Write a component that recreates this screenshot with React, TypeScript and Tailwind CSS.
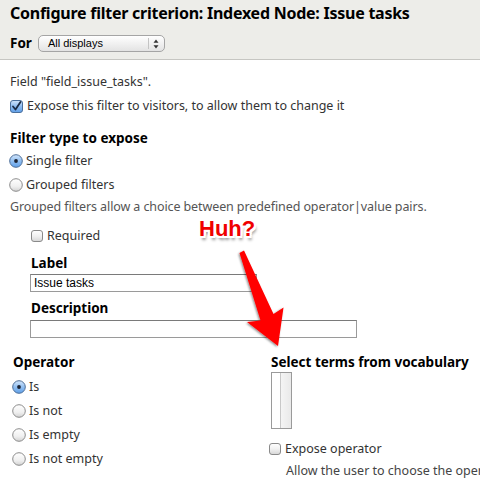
import React from "react";

function Checkbox({ checked = false }: { checked?: boolean }) {
  if (checked) {
    return (
      <svg width="13" height="13" viewBox="0 0 13 13" className="shrink-0">
        <defs>
          <linearGradient id="cbBlue" x1="0" y1="0" x2="0" y2="1">
            <stop offset="0" stopColor="#cfe3fa" />
            <stop offset="0.5" stopColor="#8dbbf0" />
            <stop offset="1" stopColor="#5f9ee6" />
          </linearGradient>
        </defs>
        <rect x="0.5" y="0.5" width="12" height="12" rx="2.5" fill="url(#cbBlue)" stroke="#4a6f9c" />
        <path d="M3 6.5 L5.5 9.5 L10.5 2" fill="none" stroke="#1a2a44" strokeWidth="1.8" strokeLinecap="round" strokeLinejoin="round" />
      </svg>
    );
  }
  return (
    <svg width="12" height="12" viewBox="0 0 12 12" className="shrink-0">
      <defs>
        <linearGradient id="cbGray" x1="0" y1="0" x2="0" y2="1">
          <stop offset="0" stopColor="#ffffff" />
          <stop offset="0.5" stopColor="#f1f1f1" />
          <stop offset="1" stopColor="#d6d6d6" />
        </linearGradient>
      </defs>
      <rect x="0.5" y="0.5" width="11" height="11" rx="2.5" fill="url(#cbGray)" stroke="#8a8a8a" />
    </svg>
  );
}

function Radio({ checked = false }: { checked?: boolean }) {
  if (checked) {
    return (
      <svg width="14" height="14" viewBox="0 0 14 14" className="shrink-0">
        <defs>
          <linearGradient id="rbBlue" x1="0" y1="0" x2="0" y2="1">
            <stop offset="0" stopColor="#d3e6fb" />
            <stop offset="0.5" stopColor="#92bff1" />
            <stop offset="1" stopColor="#5e9fe8" />
          </linearGradient>
        </defs>
        <circle cx="7" cy="7" r="6.3" fill="url(#rbBlue)" stroke="#4f6f98" />
        <circle cx="7" cy="7" r="1.9" fill="#1b2333" />
      </svg>
    );
  }
  return (
    <svg width="14" height="14" viewBox="0 0 14 14" className="shrink-0">
      <defs>
        <linearGradient id="rbGray" x1="0" y1="0" x2="0" y2="1">
          <stop offset="0" stopColor="#ffffff" />
          <stop offset="0.6" stopColor="#f0f0f0" />
          <stop offset="1" stopColor="#d2d2d2" />
        </linearGradient>
      </defs>
      <circle cx="7" cy="7" r="6.3" fill="url(#rbGray)" stroke="#8c8c8c" />
    </svg>
  );
}

export default function App() {
  return (
    <div className="relative w-[480px] h-[485px] overflow-hidden bg-white text-[12.5px] text-[#333] font-['Noto_Sans',sans-serif]">
      {/* Header */}
      <div className="h-[60px] bg-[#edede9] border-b border-[#c6c6c2] px-[10px] pt-[2px]">
        <h1 className="h-[22px] flex items-center text-[16px] font-bold text-black whitespace-nowrap tracking-[-0.25px]">
          Configure filter criterion: Indexed Node: Issue tasks
        </h1>
        <div className="mt-[9px] flex items-center gap-[6px]">
          <span className="text-[13.5px] font-bold text-black">For</span>
          <div className="relative w-[127px] h-[17px] rounded-[5px] border border-[#a5a5a5] bg-gradient-to-b from-white to-[#e3e3e3] flex items-center pl-[9px] text-[11px] text-black font-['Liberation_Sans',sans-serif]">
            All displays
            <div className="absolute right-[15px] top-[2px] bottom-[2px] w-px bg-[#c4c4c4]" />
            <svg width="6" height="10" viewBox="0 0 6 10" className="absolute right-[5px] top-[3px]">
              <path d="M3 0.5 L5.5 3.8 L0.5 3.8 Z" fill="#333" />
              <path d="M3 9.5 L5.5 6.2 L0.5 6.2 Z" fill="#333" />
            </svg>
          </div>
        </div>
      </div>

      {/* Body */}
      <div className="px-[10px]">
        <div className="mt-[10px] h-[24px] flex items-center">Field "field_issue_tasks".</div>
        <div className="h-[24px] flex items-center gap-[4px]">
          <Checkbox checked />
          <span>Expose this filter to visitors, to allow them to change it</span>
        </div>
        <div className="mt-[9px] h-[22px] flex items-center font-bold text-black text-[13.5px]">Filter type to expose</div>
        <div className="h-[24px] flex items-center gap-[3px] -ml-[1px]">
          <Radio checked />
          <span>Single filter</span>
        </div>
        <div className="h-[24px] flex items-center gap-[3px] -ml-[1px]">
          <Radio />
          <span>Grouped filters</span>
        </div>
        <div className="h-[20px] flex items-center text-[#555] tracking-[-0.1px]">
          Grouped filters allow a choice between predefined operator|value pairs.
        </div>

        <div className="pl-[20px]">
          <div className="mt-[7px] h-[24px] flex items-center gap-[4px] ml-[1px]">
            <Checkbox />
            <span>Required</span>
          </div>
          <div className="mt-[5px] h-[20px] flex items-center font-bold text-black ml-[1px] text-[13.5px]">Label</div>
          <div className="mt-[1px] w-[227px] h-[18px] border border-[#9a9a9a] border-t-[#7a7a7a] flex items-center pl-[3px] text-[12px] text-black font-['Liberation_Sans',sans-serif]">
            Issue tasks
          </div>
          <div className="mt-[6px] h-[20px] flex items-center font-bold text-black ml-[1px] text-[13.5px]">Description</div>
          <div className="mt-[2px] w-[327px] h-[18px] border border-[#9a9a9a] border-t-[#7a7a7a]" />
        </div>
      </div>

      {/* Two columns */}
      <div className="mt-[14px] flex">
        <div className="w-[271px] pl-[12px]">
          <div className="h-[20px] flex items-center font-bold text-black pl-[1px] text-[13.5px]">Operator</div>
          <div className="pt-[3px]">
            {[
              { t: "Is", c: true },
              { t: "Is not", c: false },
              { t: "Is empty", c: false },
              { t: "Is not empty", c: false },
            ].map((o) => (
              <div key={o.t} className="h-[24px] flex items-center gap-[3px]">
                <Radio checked={o.c} />
                <span>{o.t}</span>
              </div>
            ))}
          </div>
        </div>
        <div className="flex-1 min-w-0">
          <div className="h-[20px] flex items-center font-bold text-black whitespace-nowrap text-[13.5px]">Select terms from vocabulary</div>
          <div className="w-[21px] h-[57px] border border-[#9a9a9a] flex">
            <div className="w-[8px] h-full bg-white" />
            <div className="flex-1 h-full border-l border-[#c8c8c8] bg-gradient-to-r from-[#f4f4f4] to-[#e9e9e9]" />
          </div>
          <div className="mt-[8px] h-[24px] flex items-center gap-[4px] -ml-[2px]">
            <Checkbox />
            <span className="whitespace-nowrap">Expose operator</span>
          </div>
          <div className="mt-[1px] h-[18px] flex items-center pl-[15px] whitespace-nowrap text-[#444]">
            Allow the user to choose the operator.
          </div>
        </div>
      </div>

      {/* Annotation overlay */}
      <div className="absolute left-[199px] top-[218px] leading-none text-[22px] font-bold text-[#f00000] font-['Liberation_Sans',sans-serif] [text-shadow:-2px_-2px_0_#fff,2px_-2px_0_#fff,-2px_2px_0_#fff,2px_2px_0_#fff,0_-2px_0_#fff,0_2px_0_#fff,-2px_0_0_#fff,2px_0_0_#fff,2px_4px_3px_rgba(0,0,0,0.45)]">
        Huh?
      </div>
      <svg className="absolute left-0 top-0 pointer-events-none" width="480" height="485" viewBox="0 0 480 485">
        <defs>
          <filter id="arrowShadow" x="-20%" y="-20%" width="140%" height="140%">
            <feDropShadow dx="-1" dy="1" stdDeviation="1.2" floodColor="#000" floodOpacity="0.45" />
          </filter>
        </defs>
        <polygon
          points="239.5,253 244,250.5 273.5,314 283.5,307.5 278,346 247,322 260.5,320.5"
          fill="#ff0000"
          filter="url(#arrowShadow)"
        />
      </svg>
    </div>
  );
}
